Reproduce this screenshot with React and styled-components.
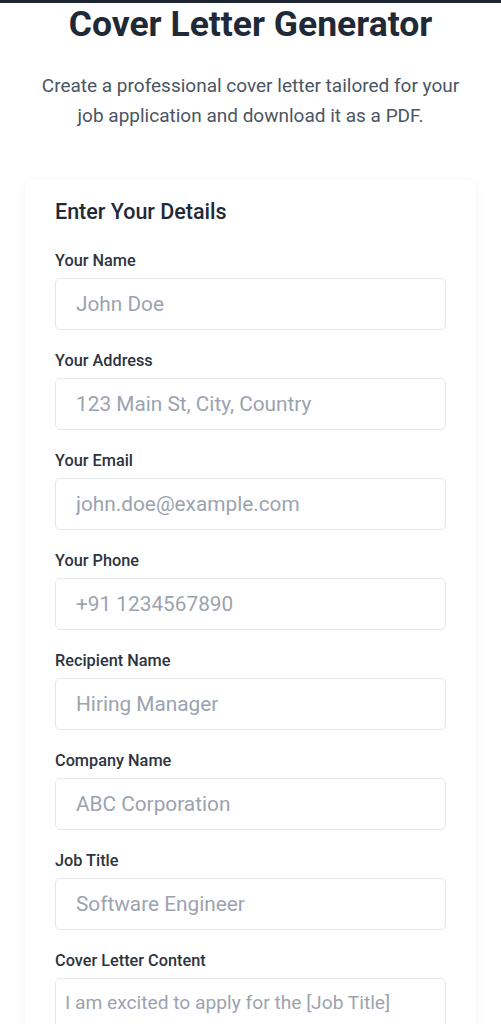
import React from "react";
import styled, { createGlobalStyle } from "styled-components";

const Global = createGlobalStyle`
  html, body { margin: 0; padding: 0; background: #ffffff; }
  body { font-family: Roboto, "Noto Sans", Arial, sans-serif; color: #1f2937; }
  * { box-sizing: border-box; }
`;

const TopBar = styled.div`
  height: 3px;
  background: #1e2533;
`;

const Page = styled.main`
  display: flex;
  flex-direction: column;
  align-items: center;
  padding: 0 25px;
`;

const Title = styled.h1`
  margin: 1px 0 0;
  font-size: 35.5px;
  line-height: 40px;
  font-weight: 700;
  color: #1f2937;
  text-align: center;
`;

const Subtitle = styled.p`
  margin: 27px 0 0;
  font-size: 19px;
  line-height: 30px;
  color: #4b5563;
  text-align: center;
  max-width: 440px;
`;

const Card = styled.section`
  margin-top: 49px;
  width: 100%;
  background: #ffffff;
  border-radius: 8px;
  box-shadow: 0 2px 10px rgba(0, 0, 0, 0.05);
  padding: 18px 30px 28px;
  display: flex;
  flex-direction: column;
`;

const CardTitle = styled.h2`
  margin: 0 0 25px;
  font-size: 21.5px;
  line-height: 28px;
  font-weight: 500;
  color: #1f2937;
`;

const Field = styled.div`
  display: flex;
  flex-direction: column;
  gap: 7px;
  margin-bottom: 21px;
`;

const Label = styled.label`
  font-size: 16.3px;
  line-height: 20px;
  font-weight: 500;
  color: #2d3440;
`;

const Input = styled.input`
  height: 52px;
  width: 100%;
  padding: 0 20px;
  border: 1px solid #e5e7eb;
  border-radius: 5px;
  font-family: inherit;
  font-size: 20.8px;
  color: #1f2937;
  background: #fff;
  &::placeholder { color: #9ca3af; }
`;

const TextArea = styled.textarea`
  width: 100%;
  height: 160px;
  padding: 7px 9px;
  border: 1px solid #e5e7eb;
  border-radius: 5px;
  font-family: inherit;
  font-size: 19.2px;
  line-height: 33px;
  resize: none;
  color: #1f2937;
  &::placeholder { color: #9ca3af; }
`;

const fields = [
  ["Your Name", "John Doe"],
  ["Your Address", "123 Main St, City, Country"],
  ["Your Email", "john.doe@example.com"],
  ["Your Phone", "+91 1234567890"],
  ["Recipient Name", "Hiring Manager"],
  ["Company Name", "ABC Corporation"],
  ["Job Title", "Software Engineer"],
];

export default function App() {
  return (
    <>
      <Global />
      <TopBar />
      <Page>
        <Title>Cover Letter Generator</Title>
        <Subtitle>
          Create a professional cover letter tailored for your job application and download it as a PDF.
        </Subtitle>
        <Card>
          <CardTitle>Enter Your Details</CardTitle>
          {fields.map(([label, ph]) => (
            <Field key={label}>
              <Label>{label}</Label>
              <Input placeholder={ph} />
            </Field>
          ))}
          <Field>
            <Label>Cover Letter Content</Label>
            <TextArea placeholder="I am excited to apply for the [Job Title] position at [Company Name]." />
          </Field>
        </Card>
      </Page>
    </>
  );
}
